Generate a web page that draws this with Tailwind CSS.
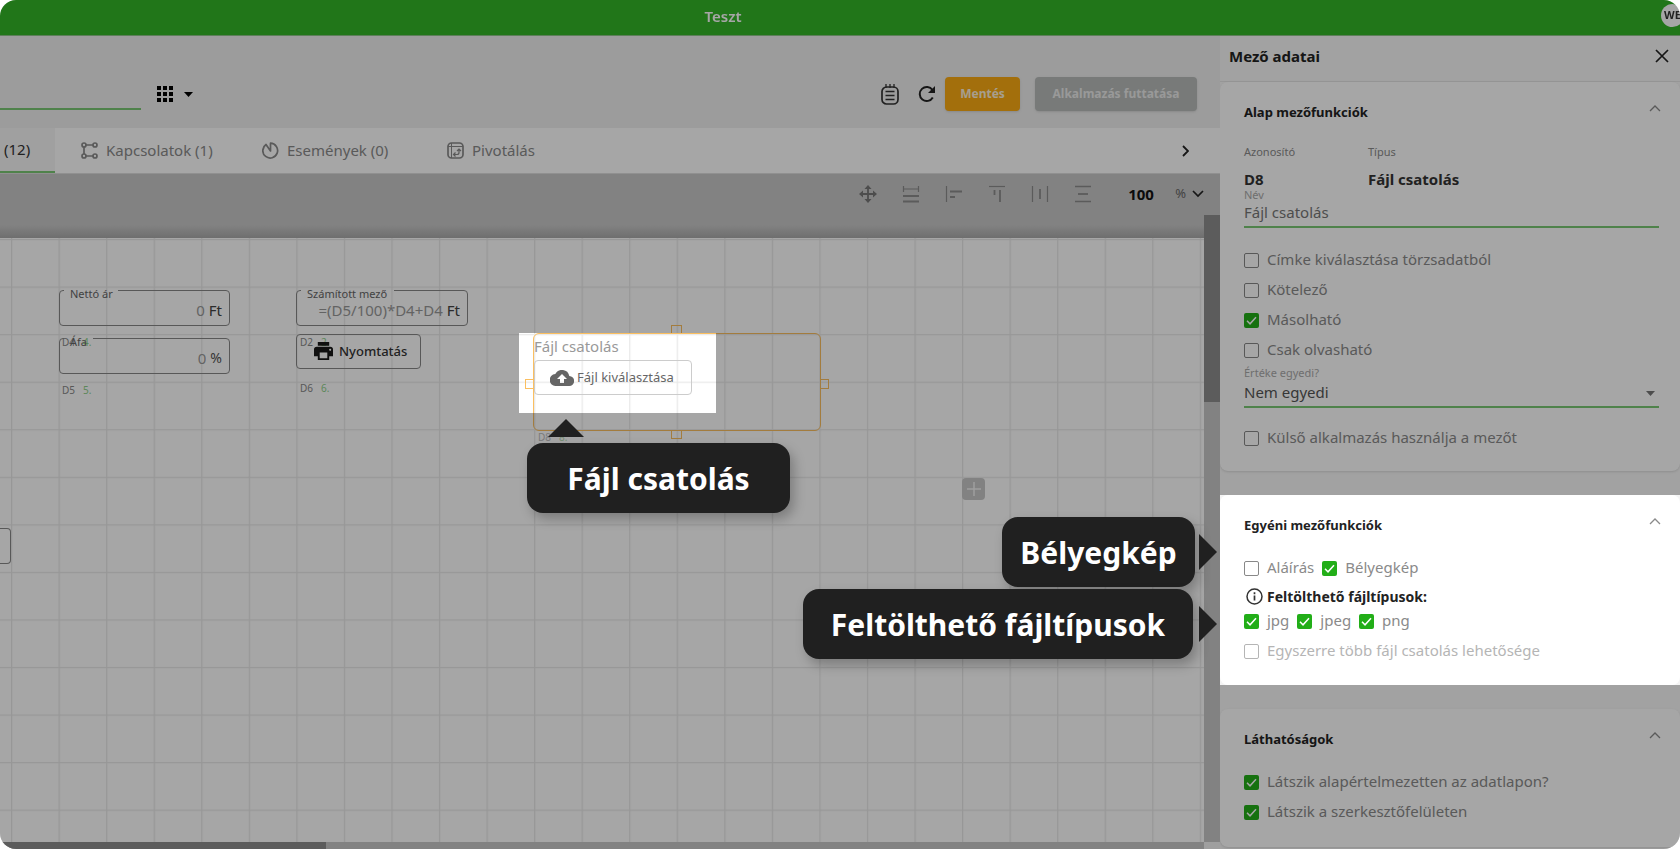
<!DOCTYPE html>
<html lang="hu">
<head>
<meta charset="utf-8">
<title>Teszt</title>
<script src="https://cdn.jsdelivr.net/npm/@tailwindcss/browser@4"></script>
</head>
<body class="bg-white font-['Noto_Sans',sans-serif] text-[#222]">
<svg class="hidden">
  <symbol id="tick" viewBox="0 0 15 15"><path d="M3 7.8l3 3 6-6.6" fill="none" stroke="#fff" stroke-width="1.5"/></symbol>
  <symbol id="up" viewBox="0 0 12 12"><path d="M1 9l5-5 5 5" fill="none" stroke="currentColor" stroke-width="1.3"/></symbol>
</svg>
<div class="flex h-screen flex-col overflow-hidden rounded-2xl">
  <header class="relative flex h-9 shrink-0 items-center overflow-hidden border-b border-[#8fc48a] bg-[#33b526] brightness-[.65]">
    <h1 class="w-full pr-[234px] pb-[3px] text-center text-[15px] font-semibold text-white">Teszt</h1>
    <span class="absolute top-1 -right-1 flex size-[23px] items-center justify-center rounded-full bg-white text-[11px] font-bold text-[#333]">WE</span>
  </header>

  <div class="flex min-h-0 flex-1">
    <main class="relative flex min-w-0 flex-1 flex-col overflow-hidden">
      <div class="flex h-[92px] shrink-0 items-center bg-[#f0f0f0] pt-6">
        <input aria-label="Alkalmazás neve" class="h-8 w-[141px] border-b-2 border-[#7ac874]">
        <button aria-label="Nézet" class="ml-4 flex items-center gap-[11px]">
          <svg class="size-4" viewBox="0 0 16 16"><path d="M0 0h4v4H0zM6 0h4v4H6zM12 0h4v4h-4zM0 6h4v4H0zM6 6h4v4H6zM12 6h4v4h-4zM0 12h4v4H0zM6 12h4v4H6zM12 12h4v4h-4z"/></svg>
          <svg class="h-[5px] w-[9px]" viewBox="0 0 9 5"><path d="M0 0h9L4.500 5z"/></svg>
        </button>
        <div class="ml-auto flex items-center pr-[23px]">
          <div class="flex items-center gap-[19px] pr-[9px]">
            <button aria-label="Jegyzetek"><svg class="h-[21px] w-[18px]" viewBox="0 0 18 21" fill="none" stroke="#333" stroke-width="1.700"><rect x="1" y="3" width="16" height="17" rx="4.500"/><path d="M4.500 7.500h9M4.500 11.500h9M4.500 15.500h9"/><path d="M5 0v4M9 0v4M13 0v4" stroke-width="1.300"/></svg></button>
            <button aria-label="Frissítés"><svg class="size-[18px]" viewBox="0 0 18 18"><path d="M14.800 12.500a7 7 0 1 1-.3-7.500" fill="none" stroke="#222" stroke-width="2"/><path d="M17 1v7h-7z" fill="#222"/></svg></button>
          </div>
          <button class="h-[34px] w-[75px] rounded bg-[#fbab13] text-xs font-bold text-[#fff3dc] shadow">Mentés</button>
          <button class="ml-[15px] h-[34px] w-[162px] rounded bg-[#b8bcba] text-xs font-bold text-[#ebebeb] shadow">Alkalmazás futtatása</button>
        </div>
      </div>

      <nav class="flex h-[46px] shrink-0 border-b border-[#ddd] bg-white text-[15px] text-[#8a8a8a]">
        <a href="#" class="flex w-[55px] items-center border-b-2 border-[#7ac874] bg-[#f6f6f6] pl-1 text-[#333]">(12)</a>
        <a href="#" class="ml-[26px] flex w-[181px] items-center gap-2">
          <svg class="size-[17px]" viewBox="0 0 17 17" fill="none" stroke="currentColor" stroke-width="1.700"><circle cx="3" cy="3" r="2"/><circle cx="14" cy="3" r="2"/><circle cx="3" cy="14" r="2"/><circle cx="14" cy="14" r="2"/><path d="M5 3h7M5 14h7M3 5v7"/></svg>Kapcsolatok (1)</a>
        <a href="#" class="flex w-[185px] items-center gap-2">
          <svg class="size-[17px]" viewBox="0 0 17 17" fill="none" stroke="currentColor" stroke-width="1.700"><path d="M8.500 9L4 2.500A7.400 7.400 0 1 0 8.500 1.200z" stroke-linejoin="round"/></svg>Események (0)</a>
        <a href="#" class="flex items-center gap-2">
          <svg class="size-[17px]" viewBox="0 0 17 17" fill="none" stroke="currentColor"><rect x="1" y="1" width="15" height="15" rx="3.500" stroke-width="1.700"/><path d="M1 4.500h15M4.500 1v15"/><path d="M7 12.500h3a2 2 0 0 0 2-2V8M10 9l2-2 2 2M8.500 10.500l-2 2 2 2" stroke-width="1.200"/></svg>Pivotálás</a>
        <button aria-label="További lapok" class="mr-[31px] ml-auto text-[#222]"><svg class="h-3 w-[7px]" viewBox="0 0 7 12"><path d="M1 1l5 5-5 5" fill="none" stroke="currentColor" stroke-width="1.800"/></svg></button>
      </nav>

      <div class="flex min-h-0 flex-1 bg-[#c8c8c8]">
        <div class="flex min-w-0 flex-1 flex-col">
          <div class="flex h-16 shrink-0 items-center justify-end bg-linear-to-b from-[#c8c8c8] from-80% to-[#aaa] pb-6 text-[#8c8c8c]">
            <div class="flex gap-[23px]">
              <button aria-label="Mozgatás" class="text-[#777]"><svg class="size-5" viewBox="0 0 20 20"><path d="M10 3v14M3 10h14" stroke="currentColor" stroke-width="1.800"/><path d="M10 1l3.500 4h-7zM10 19l3.500-4h-7zM1 10l4-3.500v7zM19 10l-4-3.500v7z" fill="currentColor"/></svg></button>
              <button aria-label="Azonos szélesség"><svg class="size-5" viewBox="0 0 20 20" fill="none" stroke="currentColor" stroke-width="1.700"><path d="M2 5h16M2.500 2v6M17.500 2v6" stroke-width="1.200"/><path d="M2 12h16M2 17.500h16" stroke-width="2"/></svg></button>
              <button aria-label="Balra igazítás"><svg class="size-5" viewBox="0 0 20 20" fill="none" stroke="currentColor" stroke-width="1.800"><path d="M2.500 2v16" stroke-width="1.200"/><path d="M6 7.500h12M6 13h5"/></svg></button>
              <button aria-label="Felülre igazítás"><svg class="size-5" viewBox="0 0 20 20" fill="none" stroke="currentColor" stroke-width="1.800"><path d="M2 2.500h16" stroke-width="1.200"/><path d="M7.500 6v5M13 6v12"/></svg></button>
              <button aria-label="Vízszintes elosztás"><svg class="size-5" viewBox="0 0 20 20" fill="none" stroke="currentColor" stroke-width="1.200"><path d="M2.500 2v16M17.500 2v16"/><path d="M10 5v10" stroke-width="1.800"/></svg></button>
              <button aria-label="Függőleges elosztás"><svg class="size-5" viewBox="0 0 20 20" fill="none" stroke="currentColor" stroke-width="1.300"><path d="M2 2.500h16M2 17.500h16"/><path d="M5 10h10" stroke-width="1.800"/></svg></button>
            </div>
            <input aria-label="Nagyítás" value="100" class="ml-[35px] w-10 text-[15px] font-bold text-[#111]">
            <span class="ml-[7px] text-[13px] text-[#666]">%</span>
            <button aria-label="Nagyítás választása" class="ml-[6px] text-[#222]"><svg class="h-2 w-3" viewBox="0 0 12 8"><path d="M1 1l5 5 5-5" fill="none" stroke="currentColor" stroke-width="1.700"/></svg></button>
          </div>

          <div class="relative min-h-0 flex-1 bg-white text-[15px]">
            <svg class="absolute inset-0 size-full">
              <defs><pattern id="grid" x="11" y="1" width="47.550" height="47.550" patternUnits="userSpaceOnUse"><path d="M.5 0v48M0 .5h48" stroke="#e9e9e9" stroke-width="1.500" fill="none"/></pattern></defs>
              <rect width="100%" height="100%" fill="url(#grid)"/>
            </svg>

            <span class="absolute top-[96px] left-[62px] flex gap-2 text-[10px] leading-4 text-[#888]">D4 <i class="text-[#8fd08a] not-italic">4.</i></span>
            <span class="absolute top-[144px] left-[62px] flex gap-2 text-[10px] leading-4 text-[#888]">D5 <i class="text-[#8fd08a] not-italic">5.</i></span>
            <span class="absolute top-[96px] left-[300px] flex gap-2 text-[10px] leading-4 text-[#888]">D2 <i class="text-[#8fd08a] not-italic">2.</i></span>
            <span class="absolute top-[142px] left-[300px] flex gap-2 text-[10px] leading-4 text-[#888]">D6 <i class="text-[#8fd08a] not-italic">6.</i></span>
            <span class="absolute top-[191px] left-[538px] flex gap-2 text-[10px] leading-4 text-[#bbb]">D8 <i class="text-[#b5ddb2] not-italic">8.</i></span>

            <div class="absolute top-[52px] left-[59px] w-[171px]">
              <fieldset class="h-[36px] rounded border border-[#888] pl-1"><legend class="h-px w-[54px]"></legend>
                <div class="flex h-[34px] items-center justify-end gap-1 pt-1 pr-[7px]"><input id="netto" value="0" class="w-20 text-right text-[#999]"><span class="text-[#444]">Ft</span></div></fieldset>
              <label for="netto" class="absolute -top-1 left-[11px] text-[11px] leading-4 text-[#666]">Nettó ár</label>
            </div>
            <div class="absolute top-[100px] left-[59px] w-[171px]">
              <fieldset class="h-[36px] rounded border border-[#888] pl-1"><legend class="h-px w-[29px]"></legend>
                <div class="flex h-[34px] items-center justify-end gap-1 pt-1 pr-[7px]"><input id="afa" value="0" class="w-20 text-right text-[#999]"><span class="text-sm text-[#555]">%</span></div></fieldset>
              <label for="afa" class="absolute -top-1 left-[11px] text-[11px] leading-4 text-[#666]">Áfa</label>
            </div>
            <div class="absolute top-[52px] left-[296px] w-[172px]">
              <fieldset class="h-[36px] rounded border border-[#888] pl-1"><legend class="h-px w-[93px]"></legend>
                <div class="flex h-[34px] items-center justify-end gap-1 pt-1 pr-[7px]"><input id="calc" value="=(D5/100)*D4+D4" class="w-[136px] text-right text-[#999]"><span class="text-[#444]">Ft</span></div></fieldset>
              <label for="calc" class="absolute -top-1 left-[11px] text-[11px] leading-4 text-[#666]">Számított mező</label>
            </div>
            <button class="absolute top-[96px] left-[296px] flex h-[35px] w-[125px] items-center gap-1.5 rounded border border-[#888] pl-[17px] text-[13px] font-medium text-[#333]">
              <svg class="size-[19px]" viewBox="0 0 20 20" fill="#1a1a1a"><path d="M4 0h12v4H4zM3 5h14a3 3 0 0 1 3 3v7h-4v4H4v-4H0V8a3 3 0 0 1 3-3zm3 6v6h8v-6zm11-3.800a1 1 0 1 0 .01 0z" fill-rule="evenodd"/></svg>Nyomtatás</button>
            <div class="absolute top-[290px] left-0 h-[36px] w-[11px] rounded-r border border-l-0 border-[#888]"></div>
            <button aria-label="Új mező" class="absolute top-[240px] left-[962px] flex h-[22px] w-[23px] items-center justify-center rounded bg-[#c8c8c8]"><svg class="size-[14px]" viewBox="0 0 14 14"><path d="M7 0v14M0 7h14" stroke="#f4f4f4" stroke-width="1.500"/></svg></button>

            <div class="absolute top-[95px] left-[533px] h-[98px] w-[288px] rounded-md border border-[#fbbf60]">
              <span class="absolute -top-[9px] left-[137px] h-[9px] w-[11px] border border-b-0 border-[#fbbf60]"></span>
              <span class="absolute -bottom-[9px] left-[137px] h-[9px] w-[11px] border border-t-0 border-[#fbbf60]"></span>
              <span class="absolute top-[45px] -left-[9px] h-[10px] w-[9px] border border-r-0 border-[#fbbf60]"></span>
              <span class="absolute top-[45px] -right-[9px] h-[10px] w-[9px] border border-l-0 border-[#fbbf60]"></span>
              <p class="pt-[2px] leading-5 text-[#999]">Fájl csatolás</p>
              <button class="mt-1 flex h-[35px] w-[158px] items-center gap-[3px] rounded border border-[#ccc] pl-[15px] text-[13px] text-[#666]">
                <svg class="h-4 w-6" viewBox="0 0 24 16" fill="#666"><path d="M19.300 6A7.500 7.500 0 0 0 5.300 4 6 6 0 0 0 6 16h13a5 5 0 0 0 .3-10zM14 9v4h-4V9H7l5-5 5 5z"/></svg>Fájl kiválasztása</button>
            </div>
          </div>
          <div class="h-[7px] shrink-0 bg-[#c8c8c8]"><div class="h-full w-[326px] bg-[#8e8e8e]"></div></div>
        </div>
        <div class="flex w-4 flex-col pt-[41px]">
          <div class="h-[187px] bg-[#8e8e8e]"></div>
          <div class="mt-auto h-[7px] bg-[#f4f4f4]"></div>
        </div>
      </div>

      <!-- spotlight over the selected field -->
      <div class="pointer-events-none absolute top-[297px] left-[519px] h-[80px] w-[197px] shadow-[0_0_0_3000px_rgba(0,0,0,0.35)]"></div>

      <div class="absolute top-[383px] left-[527px] h-[93px] w-[263px]">
        <svg class="ml-[21px] h-[18px] w-9" viewBox="0 0 36 18"><path d="M18 0l18 18H0z" fill="#202020"/></svg>
        <p class="mt-[6px] flex h-[70px] items-center justify-center rounded-2xl bg-[#202020] text-[30px] font-bold text-white shadow-[4px_6px_12px_rgba(0,0,0,0.25)]">Fájl csatolás</p>
      </div>
      <div class="absolute top-[481px] right-[3px] flex h-[70px] items-center gap-1">
        <p class="flex h-[70px] w-[193px] items-center justify-center rounded-2xl bg-[#202020] text-[30px] font-bold text-white shadow-[4px_6px_12px_rgba(0,0,0,0.25)]">Bélyegkép</p>
        <svg class="h-9 w-[18px]" viewBox="0 0 18 36"><path d="M0 0l18 18L0 36z" fill="#202020"/></svg>
      </div>
      <div class="absolute top-[553px] right-[3px] flex h-[70px] items-center gap-[6px]">
        <p class="flex h-[70px] w-[390px] items-center justify-center rounded-2xl bg-[#202020] text-[30px] font-bold text-white shadow-[4px_6px_12px_rgba(0,0,0,0.25)]">Feltölthető fájltípusok</p>
        <svg class="h-9 w-[18px]" viewBox="0 0 18 36"><path d="M0 0l18 18L0 36z" fill="#202020"/></svg>
      </div>
    </main>

    <aside class="relative w-[460px] shrink-0 overflow-hidden bg-[#f9f9f9] text-[15px] text-[#8a8a8a]">
      <div class="flex h-[46px] items-center justify-between border-b border-[#e6e6e6] pr-[11px] pb-[5px] pl-[9px]">
        <h2 class="text-[15px] font-bold text-[#222]">Mező adatai</h2>
        <button aria-label="Bezárás" class="text-[#222]"><svg class="size-[14px]" viewBox="0 0 14 14"><path d="M1 1l12 12M13 1L1 13" stroke="currentColor" stroke-width="1.700"/></svg></button>
      </div>

      <section class="h-[389px] rounded-lg bg-white pr-[21px] pl-6 shadow">
        <div class="flex h-[59px] items-center justify-between pt-[3px]">
          <h3 class="text-[13px] font-bold text-[#222]">Alap mezőfunkciók</h3>
          <button aria-label="Összecsukás" class="-mr-[2px] pb-[10px]"><svg class="size-3"><use href="#up"/></svg></button>
        </div>
        <div class="grid grid-cols-[124px_1fr]">
          <span class="text-[11px] leading-[22px]">Azonosító</span><span class="text-[11px] leading-[22px]">Típus</span>
          <b class="pt-[5px] leading-[22px] text-[#333]">D8</b><b class="pt-[5px] leading-[22px] text-[#333]">Fájl csatolás</b>
        </div>
        <label for="nev" class="block text-[11px] leading-[10px] text-[#aaa]">Név</label>
        <input id="nev" value="Fájl csatolás" class="h-7 w-full border-b-2 border-[#7ac874] pb-[2px] text-[#777]">
        <div class="flex flex-col gap-[9px] pt-[21px]">
          <label class="flex items-center gap-2 leading-[21px]"><span class="grid pt-px"><input type="checkbox" class="col-start-1 row-start-1 size-[15px] appearance-none rounded-[2px] border border-[#888]"></span>Címke kiválasztása törzsadatból</label>
          <label class="flex items-center gap-2 leading-[21px]"><span class="grid pt-px"><input type="checkbox" class="col-start-1 row-start-1 size-[15px] appearance-none rounded-[2px] border border-[#888]"></span>Kötelező</label>
          <label class="flex items-center gap-2 leading-[21px]"><span class="grid pt-px"><input type="checkbox" checked class="col-start-1 row-start-1 size-[15px] appearance-none rounded-[2px] bg-[#22ae18]"><svg class="col-start-1 row-start-1 size-[15px]"><use href="#tick"/></svg></span>Másolható</label>
          <label class="flex items-center gap-2 leading-[21px]"><span class="grid pt-px"><input type="checkbox" class="col-start-1 row-start-1 size-[15px] appearance-none rounded-[2px] border border-[#888]"></span>Csak olvasható</label>
        </div>
        <label for="egyedi" class="block pt-[5px] text-[11px] leading-4 text-[#aaa]">Értéke egyedi?</label>
        <div class="flex items-center border-b-2 border-[#7ac874]">
          <select id="egyedi" class="h-[25px] flex-1 appearance-none pb-[3px] text-[#555]"><option>Nem egyedi</option></select>
          <svg class="mr-1 h-[5px] w-[9px]" viewBox="0 0 9 5"><path d="M0 0h9L4.500 5z" fill="#777"/></svg>
        </div>
        <label class="mt-[19px] flex items-center gap-2 leading-[21px]"><span class="grid pt-px"><input type="checkbox" class="col-start-1 row-start-1 size-[15px] appearance-none rounded-[2px] border border-[#888]"></span>Külső alkalmazás használja a mezőt</label>
      </section>

      <div class="relative z-10 mt-6 bg-[#f4f4f4] shadow-[0_0_0_3000px_rgba(0,0,0,0.35)]">
        <section class="h-[190px] rounded-lg bg-white pr-[21px] pl-6">
          <div class="flex h-[59px] items-center justify-between pt-[3px]">
            <h3 class="text-[13px] font-bold text-[#222]">Egyéni mezőfunkciók</h3>
            <button aria-label="Összecsukás" class="-mr-[2px] pb-[10px]"><svg class="size-3"><use href="#up"/></svg></button>
          </div>
          <div class="flex gap-2 pt-[3px]">
            <label class="flex items-center gap-2 leading-[21px]"><span class="grid pt-px"><input type="checkbox" class="col-start-1 row-start-1 size-[15px] appearance-none rounded-[2px] border border-[#888]"></span>Aláírás</label>
            <label class="flex items-center gap-2 leading-[21px]"><span class="grid pt-px"><input type="checkbox" checked class="col-start-1 row-start-1 size-[15px] appearance-none rounded-[2px] bg-[#22ae18]"><svg class="col-start-1 row-start-1 size-[15px]"><use href="#tick"/></svg></span>Bélyegkép</label>
          </div>
          <p class="flex items-center gap-1 pt-2 pl-[2px] text-sm leading-[21px] font-bold text-[#222]">
            <svg class="size-[17px]" viewBox="0 0 17 17"><circle cx="8.500" cy="8.500" r="7.500" fill="none" stroke="#333" stroke-width="1.500"/><path d="M8.500 7.500v5M8.500 4.300v1.900" stroke="#333" stroke-width="1.700"/></svg>Feltölthető fájltípusok:</p>
          <div class="flex gap-2 pt-[3px]">
            <label class="flex items-center gap-2 leading-[21px]"><span class="grid pt-px"><input type="checkbox" checked class="col-start-1 row-start-1 size-[15px] appearance-none rounded-[2px] bg-[#22ae18]"><svg class="col-start-1 row-start-1 size-[15px]"><use href="#tick"/></svg></span>jpg</label>
            <label class="flex items-center gap-2 leading-[21px]"><span class="grid pt-px"><input type="checkbox" checked class="col-start-1 row-start-1 size-[15px] appearance-none rounded-[2px] bg-[#22ae18]"><svg class="col-start-1 row-start-1 size-[15px]"><use href="#tick"/></svg></span>jpeg</label>
            <label class="flex items-center gap-2 leading-[21px]"><span class="grid pt-px"><input type="checkbox" checked class="col-start-1 row-start-1 size-[15px] appearance-none rounded-[2px] bg-[#22ae18]"><svg class="col-start-1 row-start-1 size-[15px]"><use href="#tick"/></svg></span>png</label>
          </div>
          <label class="mt-[9px] flex items-center gap-2 leading-[21px] text-[#b5b5b5]"><span class="grid pt-px"><input type="checkbox" disabled class="col-start-1 row-start-1 size-[15px] appearance-none rounded-[2px] border border-[#b5b5b5]"></span>Egyszerre több fájl csatolás lehetősége</label>
        </section>
      </div>

      <section class="mt-6 h-[138px] rounded-lg bg-white pr-[21px] pl-6 shadow">
        <div class="flex h-[59px] items-center justify-between pt-[3px]">
          <h3 class="text-[13px] font-bold text-[#222]">Láthatóságok</h3>
          <button aria-label="Összecsukás" class="-mr-[2px] pb-[10px]"><svg class="size-3"><use href="#up"/></svg></button>
        </div>
        <div class="flex flex-col gap-[9px] pt-[3px]">
          <label class="flex items-center gap-2 leading-[21px]"><span class="grid pt-px"><input type="checkbox" checked class="col-start-1 row-start-1 size-[15px] appearance-none rounded-[2px] bg-[#22ae18]"><svg class="col-start-1 row-start-1 size-[15px]"><use href="#tick"/></svg></span>Látszik alapértelmezetten az adatlapon?</label>
          <label class="flex items-center gap-2 leading-[21px]"><span class="grid pt-px"><input type="checkbox" checked class="col-start-1 row-start-1 size-[15px] appearance-none rounded-[2px] bg-[#22ae18]"><svg class="col-start-1 row-start-1 size-[15px]"><use href="#tick"/></svg></span>Látszik a szerkesztőfelületen</label>
        </div>
      </section>
    </aside>
  </div>
</div>
</body>
</html>
